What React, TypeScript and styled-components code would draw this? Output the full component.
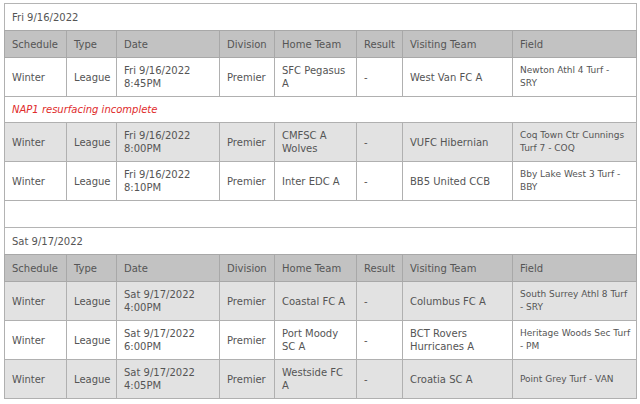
import React from "react";
import styled, { createGlobalStyle } from "styled-components";

const Global = createGlobalStyle`
  html, body { margin: 0; padding: 0; background: #fff; }
  body { padding: 3px 4px 0 4px; font-family: "DejaVu Sans", Verdana, sans-serif; }
`;

const Table = styled.table`
  width: 632px;
  border-collapse: collapse;
  table-layout: fixed;
  font-size: 10px;
  color: #555;
  border: 1px solid #b4b4b4;
`;

const Col = styled.col<{ w: number }>`
  width: ${(p) => p.w}px;
`;

const DayRow = styled.tr`
  height: 27px;
  background: #fff;
`;

const DayCell = styled.td`
  padding: 0 7px;
  font-size: 10px;
  color: #555;
  border-top: 1px solid #b4b4b4;
`;

const SpacerRow = styled.tr`
  height: 27px;
`;

const HeadRow = styled.tr`
  height: 27px;
  background: #c2c2c2;
`;

const Th = styled.th`
  font-weight: normal;
  text-align: left;
  padding: 0 7px;
  border: 1px solid #a8a8a8;
  color: #555;
`;

const DataRow = styled.tr<{ alt?: boolean }>`
  height: 39px;
  background: ${(p) => (p.alt ? "#e2e2e2" : "#fff")};
`;

const Td = styled.td<{ small?: boolean }>`
  padding: 0 7px;
  border: 1px solid #b0b0b0;
  line-height: 13px;
  vertical-align: middle;
  font-size: ${(p) => (p.small ? "9px" : "10px")};
`;

const Line = styled.span`
  display: block;
  white-space: nowrap;
`;

const NoteRow = styled.tr`
  height: 26px;
`;

const NoteCell = styled.td`
  padding: 0 7px;
  color: #e02b2b;
  font-style: italic;
  border: 1px solid #b0b0b0;
`;

type Game = {
  date: string;
  time: string;
  home: string;
  visiting: string;
  field: string[];
  alt?: boolean;
};

const cols = [62, 50, 103, 55, 82, 46, 110, 124];
const headers = ["Schedule", "Type", "Date", "Division", "Home Team", "Result", "Visiting Team", "Field"];

const Header = () => (
  <HeadRow>
    {headers.map((h) => (
      <Th key={h}>{h}</Th>
    ))}
  </HeadRow>
);

const GameRow = ({ g }: { g: Game }) => (
  <DataRow alt={g.alt}>
    <Td>Winter</Td>
    <Td>League</Td>
    <Td>
      {g.date}
      <br />
      {g.time}
    </Td>
    <Td>Premier</Td>
    <Td>{g.home}</Td>
    <Td>-</Td>
    <Td>{g.visiting}</Td>
    <Td small>
      {g.field.map((l) => (
        <Line key={l}>{l}</Line>
      ))}
    </Td>
  </DataRow>
);

export default function App() {
  return (
    <>
      <Global />
      <Table>
        <colgroup>
          {cols.map((w, i) => (
            <Col key={i} w={w} />
          ))}
        </colgroup>
        <tbody>
          <DayRow>
            <DayCell colSpan={8}>Fri 9/16/2022</DayCell>
          </DayRow>
          <Header />
          <GameRow g={{ date: "Fri 9/16/2022", time: "8:45PM", home: "SFC Pegasus A", visiting: "West Van FC A", field: ["Newton Athl 4 Turf -", "SRY"] }} />
          <NoteRow>
            <NoteCell colSpan={8}>NAP1 resurfacing incomplete</NoteCell>
          </NoteRow>
          <GameRow g={{ date: "Fri 9/16/2022", time: "8:00PM", home: "CMFSC A Wolves", visiting: "VUFC Hibernian", field: ["Coq Town Ctr Cunnings", "Turf 7 - COQ"], alt: true }} />
          <GameRow g={{ date: "Fri 9/16/2022", time: "8:10PM", home: "Inter EDC A", visiting: "BB5 United CCB", field: ["Bby Lake West 3 Turf -", "BBY"] }} />
          <SpacerRow>
            <DayCell colSpan={8} />
          </SpacerRow>
          <DayRow>
            <DayCell colSpan={8}>Sat 9/17/2022</DayCell>
          </DayRow>
          <Header />
          <GameRow g={{ date: "Sat 9/17/2022", time: "4:00PM", home: "Coastal FC A", visiting: "Columbus FC A", field: ["South Surrey Athl 8 Turf", "- SRY"], alt: true }} />
          <GameRow g={{ date: "Sat 9/17/2022", time: "6:00PM", home: "Port Moody SC A", visiting: "BCT Rovers Hurricanes A", field: ["Heritage Woods Sec Turf", "- PM"] }} />
          <GameRow g={{ date: "Sat 9/17/2022", time: "4:05PM", home: "Westside FC A", visiting: "Croatia SC A", field: ["Point Grey Turf - VAN"], alt: true }} />
        </tbody>
      </Table>
    </>
  );
}
